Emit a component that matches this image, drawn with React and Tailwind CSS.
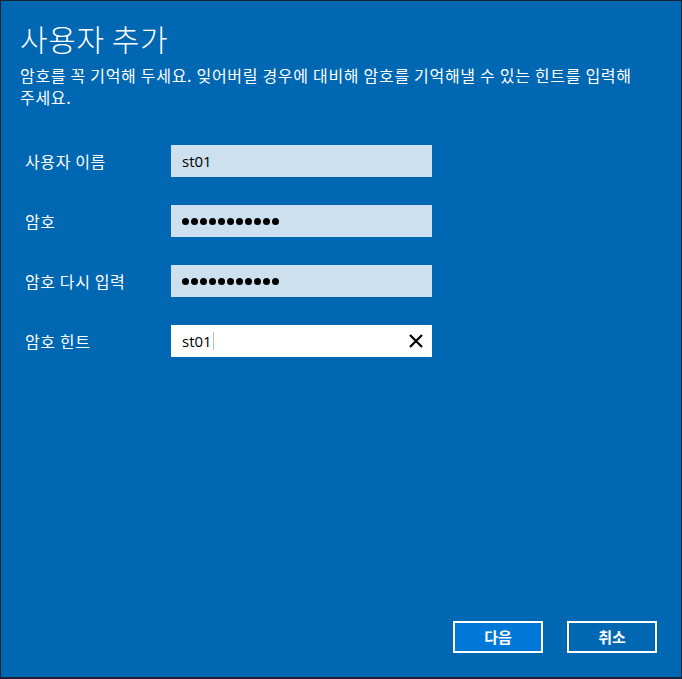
import React from "react";

const font = { fontFamily: '"Noto Sans CJK KR", "Noto Sans", sans-serif' };

function Dots() {
  return (
    <div className="flex gap-[2px]">
      {Array.from({ length: 11 }).map((_, i) => (
        <span key={i} className="w-[7px] h-[7px] rounded-full bg-black" />
      ))}
    </div>
  );
}

function Field({ label, value, type = "text", active = false }) {
  return (
    <div className="flex items-center h-8 mb-7">
      <div className="w-[146px] text-[16px] tracking-[0.6px] text-white">{label}</div>
      <div
        className={
          "relative flex items-center w-[261px] h-8 px-[11px] " +
          (active ? "bg-white" : "bg-[#cce0ef]")
        }
      >
        {type === "password" ? (
          <Dots />
        ) : (
          <span className="text-[15px] text-black" style={{ fontFamily: '"Open Sans", "Noto Sans", sans-serif' }}>
            {value}
          </span>
        )}
        {active && (
          <>
            <span className="w-px h-[18px] bg-[#c0c0c0] ml-px" />
            <svg
              className="absolute right-[9px] top-[9px]"
              width="14"
              height="14"
              viewBox="0 0 14 14"
            >
              <path d="M1 1 L13 13 M13 1 L1 13" stroke="#000" strokeWidth="2.2" />
            </svg>
          </>
        )}
      </div>
    </div>
  );
}

export default function App() {
  return (
    <div
      className="w-[682px] h-[679px] bg-[#0067b3] border-l border-r border-t border-b-2 border-[#1b2432] flex flex-col text-white"
      style={font}
    >
      <div className="pl-[19px] pr-3 pt-[18px]">
        <h1 className="text-[30px] font-light leading-[38px] tracking-[0.6px]">사용자 추가</h1>
        <p className="mt-[7px] text-[16px] leading-[22px] tracking-[0.7px] break-keep">
          암호를 꼭 기억해 두세요. 잊어버릴 경우에 대비해 암호를 기억해낼 수 있는 힌트를 입력해 주세요.
        </p>
      </div>

      <div className="pl-[24px] mt-[37px]">
        <Field label="사용자 이름" value="st01" />
        <Field label="암호" type="password" />
        <Field label="암호 다시 입력" type="password" />
        <Field label="암호 힌트" value="st01" active />
      </div>

      <div className="mt-auto flex justify-end gap-6 pr-6 pb-6">
        <button className="w-[90px] h-[32px] border-2 border-white bg-[#0078d7] text-[15px] font-bold text-white">
          다음
        </button>
        <button className="w-[90px] h-[32px] border-2 border-white text-[15px] font-bold text-white">
          취소
        </button>
      </div>
    </div>
  );
}
